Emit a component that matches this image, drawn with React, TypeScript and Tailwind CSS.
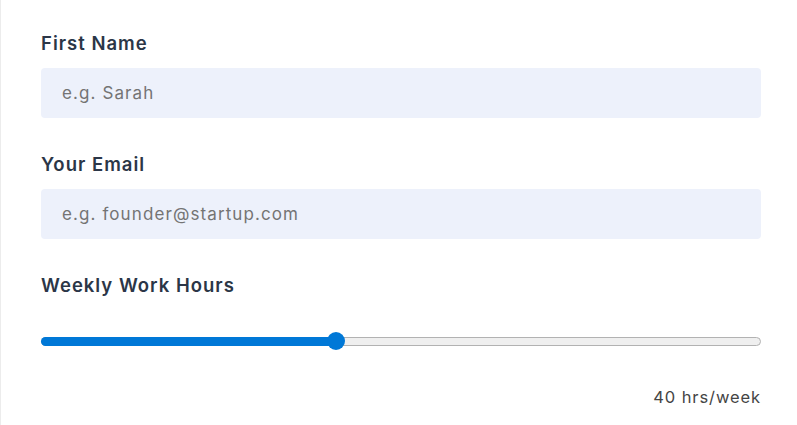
import { useState } from "react";

const App = () => {
    const [hours] = useState(40);
    const min = 0;
    const max = 100;
    const pct = ((hours - min) / (max - min)) * 100;

    return (
        <div className="min-h-screen bg-white border-l border-[#ececec] pl-10 pr-9 pt-[29px] font-['Inter',sans-serif]">
            <div className="flex flex-col">
                <label className="text-[18.5px] leading-7 font-semibold tracking-[1px] text-[#2b3647]">First Name</label>
                <input
                    type="text"
                    placeholder="e.g. Sarah"
                    className="mt-[11px] h-[50px] w-full rounded bg-[#edf1fb] px-[21px] text-[17px] tracking-[1.1px] text-[#333] placeholder:text-[#747474] focus:outline-none"
                />

                <label className="mt-8 text-[18.5px] leading-7 font-semibold tracking-[1px] text-[#2b3647]">Your Email</label>
                <input
                    type="email"
                    placeholder="e.g. founder@startup.com"
                    className="mt-[11px] h-[50px] w-full rounded bg-[#edf1fb] px-[21px] text-[17px] tracking-[1.1px] text-[#333] placeholder:text-[#747474] focus:outline-none"
                />

                <label className="mt-8 text-[18.5px] leading-7 font-semibold tracking-[1px] text-[#2b3647]">Weekly Work Hours</label>

                {/* slider */}
                <div className="relative mt-[33px] h-[18px] w-full flex items-center">
                    <div className="h-[9px] w-full rounded-full border border-[#b2b2b2] bg-[#efefef]" />
                    <div
                        className="absolute left-0 h-[9px] rounded-full bg-[#0078d7]"
                        style={{ width: `calc(${pct}% * 0.975 + 14px)` }}
                    />
                    <div
                        className="absolute h-[18px] w-[18px] -ml-[9px] rounded-full bg-[#0078d7]"
                        style={{ left: `calc(${pct}% * 0.975 + 14px)` }}
                    />
                </div>

                <p className="mt-[35px] text-right text-[16.5px] leading-6 tracking-[0.9px] text-[#454545]">{hours} hrs/week</p>
            </div>
        </div>
    );
};

export default App;
